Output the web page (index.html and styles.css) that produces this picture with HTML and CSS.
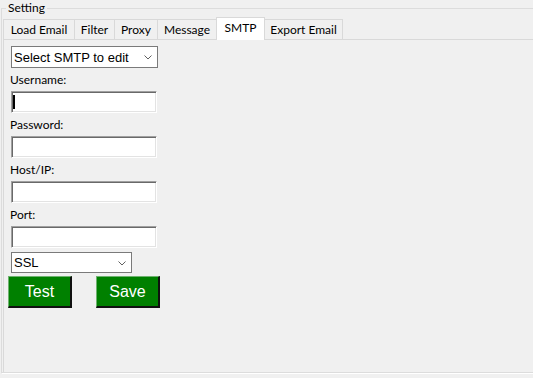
FILE: index.html
```html
<!DOCTYPE html>
<html lang="en">
<head>
    <meta charset="UTF-8">
    <meta name="viewport" content="width=device-width, initial-scale=1.0">
    <title>Setting</title>
    <link rel="stylesheet" href="styles.css">
</head>
<body>
    <fieldset class="group">
        <legend class="group-title">Setting</legend>
        <div class="tabs">
            <div class="tab tab-load">Load Email</div>
            <div class="tab tab-filter">Filter</div>
            <div class="tab tab-proxy">Proxy</div>
            <div class="tab tab-message">Message</div>
            <div class="tab tab-smtp active">SMTP</div>
            <div class="tab tab-export">Export Email</div>
        </div>
        <div class="tab-page">
            <div class="combo combo-smtp">
                <span>Select SMTP to edit</span>
                <svg class="chevron" width="8" height="5" viewBox="0 0 8 5"><polyline points="0.5,0.5 4,4 7.5,0.5" fill="none" stroke="#606060" stroke-width="1"/></svg>
            </div>
            <label class="field-label">Username:</label>
            <div class="textbox"><span class="caret"></span></div>
            <label class="field-label">Password:</label>
            <div class="textbox"></div>
            <label class="field-label">Host/IP:</label>
            <div class="textbox"></div>
            <label class="field-label">Port:</label>
            <div class="textbox"></div>
            <div class="combo combo-ssl">
                <span>SSL</span>
                <svg class="chevron" width="8" height="5" viewBox="0 0 8 5"><polyline points="0.5,0.5 4,4 7.5,0.5" fill="none" stroke="#606060" stroke-width="1"/></svg>
            </div>
            <div class="actions">
                <button class="btn">Test</button>
                <button class="btn">Save</button>
            </div>
        </div>
    </fieldset>
</body>
</html>
```

FILE: styles.css
```css
html, body {
    margin: 0;
    padding: 0;
    background-color: #f0f0f0;
    overflow: hidden;
}
body {
    font-family: Lato, "Open Sans", sans-serif;
    font-size: 12px;
    color: #000;
    width: 533px;
    height: 378px;
}
.group {
    margin: 0 0 0 1px;
    padding: 1px 0 0 0;
    border: 1px solid #dcdcdc;
    box-shadow: 1px 1px 0 #fff;
    width: 560px;
    box-sizing: border-box;
}
.group-title {
    margin-left: 4px;
    padding: 0 2px;
    line-height: 16px;
    font-size: 12px;
}
.tabs {
    display: flex;
    align-items: flex-end;
    height: 22px;
    margin-left: 1px;
}
.tab {
    box-sizing: border-box;
    height: 20px;
    line-height: 17px;
    padding-top: 1px;
    text-align: center;
    border: 1px solid #d9d9d9;
    border-bottom: none;
    margin-left: -1px;
    background-color: #f0f0f0;
}
.tab:first-child {
    margin-left: 0;
}
.tab.active {
    height: 23px;
    margin-bottom: -1px;
    background-color: #fff;
    position: relative;
    z-index: 1;
}
.tab-load { width: 72px; }
.tab-filter { width: 41px; }
.tab-proxy { width: 44px; }
.tab-message { width: 60px; }
.tab-smtp { width: 49px; }
.tab-export { width: 79px; }
.tab-page {
    box-sizing: border-box;
    height: 333px;
    margin-left: 1px;
    border-top: 1px solid #d9d9d9;
    border-left: 1px solid #d9d9d9;
    padding: 6px 0 0 7px;
}
.combo {
    box-sizing: border-box;
    display: flex;
    align-items: center;
    justify-content: space-between;
    background-color: #fff;
    border: 1px solid #7a7a7a;
    padding: 0 5px 0 2px;
    font-family: "Liberation Sans", Arial, sans-serif;
    font-size: 13px;
}
.combo-smtp {
    width: 147px;
    height: 22px;
}
.combo-ssl {
    width: 121px;
    height: 21px;
    margin-top: 4px;
}
.chevron {
    display: block;
    margin-top: 1px;
}
.field-label {
    display: block;
    box-sizing: border-box;
    height: 23px;
    padding-top: 5px;
    line-height: 13px;
    margin-left: -1px;
}
.textbox {
    box-sizing: border-box;
    width: 146px;
    height: 22px;
    background-color: #fff;
    border-style: solid;
    border-width: 1px;
    border-color: #a0a0a0 #fff #fff #a0a0a0;
    box-shadow: inset 1px 1px 0 #696969, inset -1px -1px 0 #e3e3e3;
}
.caret {
    display: block;
    width: 2px;
    height: 14px;
    margin: 3px 0 0 1px;
    background-color: #000;
}
.actions {
    display: flex;
    gap: 24px;
    margin: 3px 0 0 -3px;
}
.btn {
    box-sizing: border-box;
    width: 64px;
    height: 32px;
    padding: 0;
    background-color: #008000;
    color: #fff;
    font-family: "Liberation Sans", Arial, sans-serif;
    font-size: 16px;
    border-style: solid;
    border-width: 1px 2px 2px 1px;
    border-color: #6fb26f #101010 #101010 #6fb26f;
    cursor: pointer;
}
```
